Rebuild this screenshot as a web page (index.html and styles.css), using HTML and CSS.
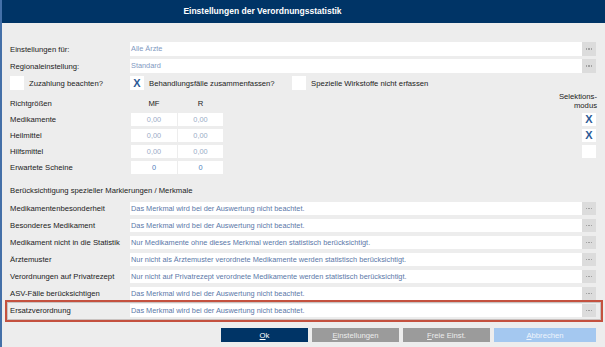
FILE: index.html
```html
<!DOCTYPE html>
<html lang="de">
<head>
  <meta charset="UTF-8">
  <meta name="viewport" content="width=device-width, initial-scale=1.0">
  <title>Einstellungen der Verordnungsstatistik</title>
  <link rel="stylesheet" href="styles.css">
</head>
<body>
  <div class="dialog">
    <div class="titlebar">Einstellungen der Verordnungsstatistik</div>
    <div class="content">
      <div class="field-row">
        <span class="label">Einstellungen für:</span>
        <span class="input light">Alle Ärzte</span>
        <span class="dots"><i></i><i></i><i></i></span>
      </div>
      <div class="field-row">
        <span class="label">Regionaleinstellung:</span>
        <span class="input light">Standard</span>
        <span class="dots"><i></i><i></i><i></i></span>
      </div>

      <div class="check-row">
        <label class="check"><span class="box"></span>Zuzahlung beachten?</label>
        <label class="check"><span class="box">X</span>Behandlungsfälle zusammenfassen?</label>
        <label class="check"><span class="box"></span>Spezielle Wirkstoffe nicht erfassen</label>
      </div>

      <div class="richt">
        <span class="head label">Richtgrößen</span>
        <span class="head center">MF</span>
        <span class="head center">R</span>
        <span></span>
        <span class="head sel">Selektions-<br>modus</span>

        <span class="label">Medikamente</span>
        <span class="num">0,00</span>
        <span class="num">0,00</span>
        <span></span>
        <span class="box">X</span>

        <span class="label">Heilmittel</span>
        <span class="num">0,00</span>
        <span class="num">0,00</span>
        <span></span>
        <span class="box">X</span>

        <span class="label">Hilfsmittel</span>
        <span class="num">0,00</span>
        <span class="num">0,00</span>
        <span></span>
        <span class="box"></span>

        <span class="label">Erwartete Scheine</span>
        <span class="num count">0</span>
        <span class="num count">0</span>
        <span></span>
        <span></span>
      </div>

      <div class="section">Berücksichtigung spezieller Markierungen / Merkmale</div>

      <div class="merkmale">
        <div class="field-row">
          <span class="label">Medikamentenbesonderheit</span>
          <span class="input">Das Merkmal wird bei der Auswertung nicht beachtet.</span>
          <span class="dots"><i></i><i></i><i></i></span>
        </div>
        <div class="field-row">
          <span class="label">Besonderes Medikament</span>
          <span class="input">Das Merkmal wird bei der Auswertung nicht beachtet.</span>
          <span class="dots"><i></i><i></i><i></i></span>
        </div>
        <div class="field-row">
          <span class="label">Medikament nicht in die Statistik</span>
          <span class="input">Nur Medikamente ohne dieses Merkmal werden statistisch berücksichtigt.</span>
          <span class="dots"><i></i><i></i><i></i></span>
        </div>
        <div class="field-row">
          <span class="label">Ärztemuster</span>
          <span class="input">Nur nicht als Ärztemuster verordnete Medikamente werden statistisch berücksichtigt.</span>
          <span class="dots"><i></i><i></i><i></i></span>
        </div>
        <div class="field-row">
          <span class="label">Verordnungen auf Privatrezept</span>
          <span class="input">Nur nicht auf Privatrezept verordnete Medikamente werden statistisch berücksichtigt.</span>
          <span class="dots"><i></i><i></i><i></i></span>
        </div>
        <div class="field-row">
          <span class="label">ASV-Fälle berücksichtigen</span>
          <span class="input">Das Merkmal wird bei der Auswertung nicht beachtet.</span>
          <span class="dots"><i></i><i></i><i></i></span>
        </div>
        <div class="highlight">
          <div class="field-row">
            <span class="label">Ersatzverordnung</span>
            <span class="input">Das Merkmal wird bei der Auswertung nicht beachtet.</span>
            <span class="dots"><i></i><i></i><i></i></span>
          </div>
        </div>
      </div>

      <div class="buttons">
        <button class="btn primary"><u>O</u>k</button>
        <button class="btn grey"><u>E</u>instellungen</button>
        <button class="btn grey"><u>F</u>reie Einst.</button>
        <button class="btn cancel"><u>A</u>bbrechen</button>
      </div>
    </div>
  </div>
</body>
</html>
```

FILE: styles.css
```css
body {
  margin: 0;
  background-color: #ededed;
  font-family: "Liberation Sans", Arial, sans-serif;
  font-size: 7.7px;
  color: #222;
  overflow: hidden;
}
.dialog {
  height: 347px;
  border-left: 2px solid #4470a8;
  box-sizing: border-box;
}
.titlebar {
  height: 23px;
  line-height: 23px;
  background-color: #003466;
  color: white;
  font-weight: bold;
  font-size: 8.5px;
  text-align: center;
  padding-right: 82px;
}
.content {
  padding: 19px 9px 0 8px;
}
.field-row {
  display: grid;
  grid-template-columns: 120px 1fr 14px;
  height: 14px;
  margin-bottom: 3px;
  align-items: center;
}
.label {
  white-space: nowrap;
  line-height: 9px;
}
.input {
  background-color: white;
  height: 100%;
  line-height: 14px;
  padding-left: 1px;
  font-size: 7.35px;
  color: #5a78a8;
  white-space: nowrap;
  overflow: hidden;
}
.input.light {
  color: #8199bf;
}
.dots {
  height: 100%;
  background-color: #dcdcdc;
  display: flex;
  justify-content: center;
  align-items: center;
  gap: 1px;
}
.dots i {
  width: 1.5px;
  height: 1.5px;
  background-color: #a2a2a2;
}
.check-row {
  display: grid;
  grid-template-columns: 120px 162px 1fr;
  height: 14px;
}
.check {
  display: flex;
  align-items: center;
  gap: 4px;
  white-space: nowrap;
}
.box {
  width: 14px;
  height: 14px;
  background-color: white;
  color: #2c5a96;
  font-weight: bold;
  font-size: 11px;
  line-height: 14px;
  text-align: center;
}
.check .box {
  margin-right: 1px;
}
.richt {
  display: grid;
  grid-template-columns: 120px 46px 45px 1fr 14px;
  grid-template-rows: 19px repeat(4, 13px);
  column-gap: 1px;
  row-gap: 3px;
  margin-top: 1px;
  align-items: center;
}
.richt > :first-child {
  margin-right: -1px;
}
.richt .head {
  align-self: end;
  line-height: 9px;
  padding-bottom: 2px;
}
.richt .center {
  text-align: center;
}
.richt .sel {
  justify-self: end;
  text-align: right;
  white-space: nowrap;
  padding-bottom: 0;
  margin-right: -1px;
}
.richt .box {
  height: 13px;
  line-height: 13px;
}
.num {
  height: 13px;
  line-height: 13px;
  background-color: white;
  text-align: center;
  font-size: 7.35px;
  color: #9aabc6;
}
.num.count {
  color: #4f80bd;
}
.section {
  margin-top: 10px;
  height: 13px;
  line-height: 13px;
  margin-bottom: 5px;
}
.merkmale .field-row {
  height: 13px;
  margin-bottom: 4px;
}
.merkmale .input {
  line-height: 13px;
}
.highlight {
  margin: -4px -7px 0 -5px;
  padding: 2px 5px 3px 3px;
  border: 2px solid #c4513f;
  box-shadow: inset 0 0 0 1px #c9c2c0;
}
.highlight .field-row {
  margin-bottom: 0;
}
.buttons {
  display: flex;
  justify-content: flex-end;
  gap: 4px;
  margin-top: 6px;
}
.btn {
  width: 87px;
  height: 14px;
  border: none;
  padding: 0;
  font-family: inherit;
  font-size: 7.7px;
  cursor: pointer;
}
.btn.primary {
  background-color: #003466;
  color: white;
}
.btn.grey {
  background-color: #9b9b9b;
  color: #ececec;
}
.btn.cancel {
  width: 102px;
  background-color: #a4c8f0;
  color: #eef4fc;
}
```
